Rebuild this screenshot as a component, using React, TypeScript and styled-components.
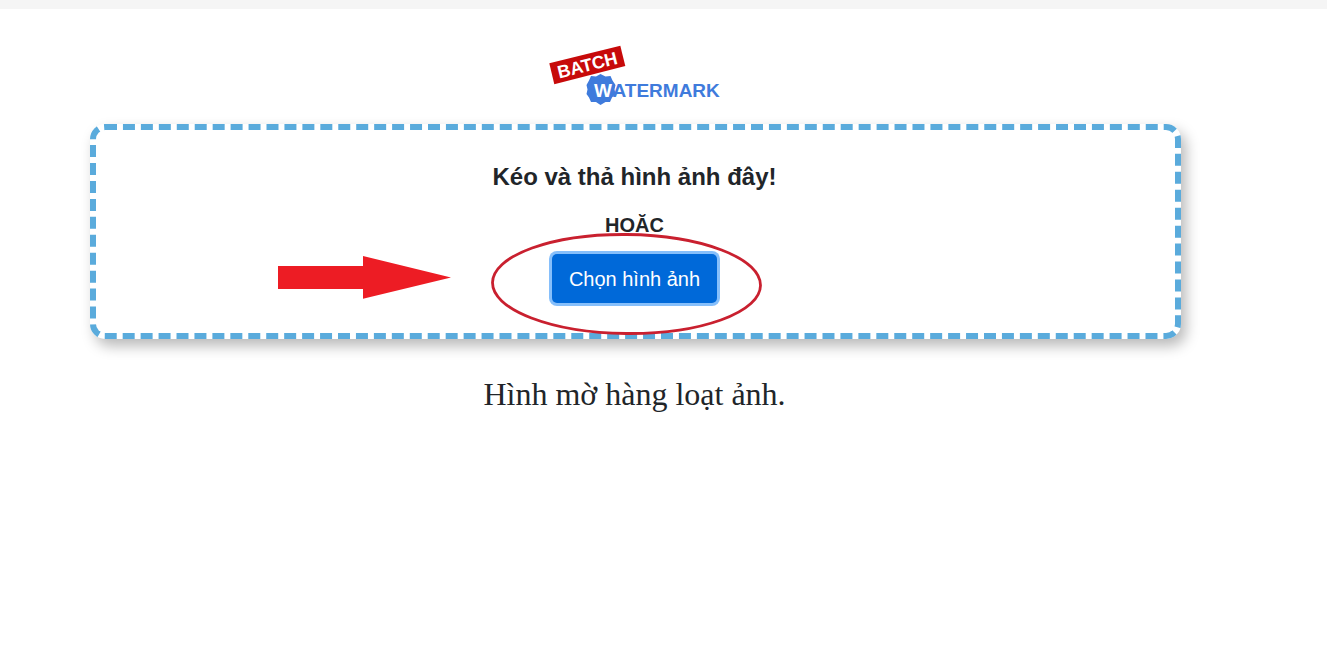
import styled, { createGlobalStyle } from "styled-components";

const GlobalStyle = createGlobalStyle`
  html, body {
    margin: 0;
    padding: 0;
    background: #fff;
    color: #212529;
    font-family: "Liberation Sans", Arial, sans-serif;
  }
`;

function Logo() {
  return (
    <S.Logo viewBox="546 42 178 64" aria-label="Batch Watermark">
      <polygon points="548.3,63.3 619.3,45.7 624.3,66 553.3,84.3" fill="#c70a0a" />
      <text
        x="586.3"
        y="71.2"
        fill="#fff"
        fontFamily="Liberation Sans"
        fontWeight="700"
        fontSize="17.8"
        textAnchor="middle"
        transform="rotate(-14.2 586.3 65)"
      >
        BATCH
      </text>
      <polygon
        points="599.5,74 604.5,76.5 609.5,76 611.5,80.5 614.5,85 613.5,89.5 614.5,94 611,97.5 609,102 604.5,102 599.5,105 595,102 590,102 588,97.5 585.5,94 586.5,89.5 585.5,85 588,80.5 590,76 595,76.5"
        fill="#3f7bdc"
      />
      <text x="593" y="96.8" fill="#fff" fontFamily="Liberation Sans" fontWeight="700" fontSize="19">
        W
      </text>
      <text x="611.5" y="96.8" fill="#3f7bdc" fontFamily="Liberation Sans" fontWeight="700" fontSize="19">
        ATERMARK
      </text>
    </S.Logo>
  );
}

function Annotations() {
  return (
    <S.Annotations viewBox="90 124 1091 215">
      <polygon points="278,266 363,266 363,256 451,277.5 363,298.7 363,289 278,289" fill="#ed1c24" />
      <ellipse
        cx="626.5"
        cy="284"
        rx="134"
        ry="49.5"
        fill="none"
        stroke="#c9202f"
        strokeWidth="2.8"
        transform="rotate(0.6 626.5 284)"
      />
    </S.Annotations>
  );
}

export default function App() {
  return (
    <>
      <GlobalStyle />
      <S.TopBar />
      <S.Page>
        <Logo />
        <S.DropZone>
          <S.Title>Kéo và thả hình ảnh đây!</S.Title>
          <S.Or>HOẶC</S.Or>
          <S.Button type="button">Chọn hình ảnh</S.Button>
          <Annotations />
        </S.DropZone>
        <S.Caption>Hình mờ hàng loạt ảnh.</S.Caption>
      </S.Page>
    </>
  );
}

const S = {
  TopBar: styled.div`
    height: 9px;
    background: #f5f5f5;
  `,
  Page: styled.main`
    width: 1269px;
    min-height: 639px;
    padding-top: 33px;
    box-sizing: border-box;
    display: flex;
    flex-direction: column;
    align-items: center;
  `,
  Logo: styled.svg`
    display: block;
    width: 178px;
    height: 64px;
    margin-left: 2px;
    margin-bottom: 18px;
  `,
  DropZone: styled.section`
    position: relative;
    width: 1091px;
    height: 215px;
    margin-left: 2px;
    padding: 32px 2px 0 0;
    box-sizing: border-box;
    display: flex;
    flex-direction: column;
    align-items: center;
    border: 6px dashed #5aabdc;
    border-radius: 15px;
    box-shadow: 5px 7px 14px rgba(0, 0, 0, 0.28);
  `,
  Title: styled.h2`
    margin: 0 0 22px;
    font-size: 24px;
    line-height: 29px;
    font-weight: 700;
  `,
  Or: styled.h3`
    margin: 0 0 17px;
    font-size: 20px;
    line-height: 24px;
    font-weight: 700;
  `,
  Button: styled.button`
    width: 165px;
    height: 49px;
    padding: 1px 0 0;
    font-family: inherit;
    font-size: 20px;
    color: #fff;
    background: #0069d9;
    border: 0;
    border-radius: 5px;
    box-shadow: 0 0 0 3px #86bffb;
  `,
  Annotations: styled.svg`
    position: absolute;
    left: -6px;
    top: -6px;
    width: 1091px;
    height: 215px;
    overflow: visible;
    pointer-events: none;
  `,
  Caption: styled.p`
    margin: 36px 0 0;
    font-family: "Liberation Serif", "Times New Roman", serif;
    font-size: 32px;
    line-height: 38px;
  `,
};
